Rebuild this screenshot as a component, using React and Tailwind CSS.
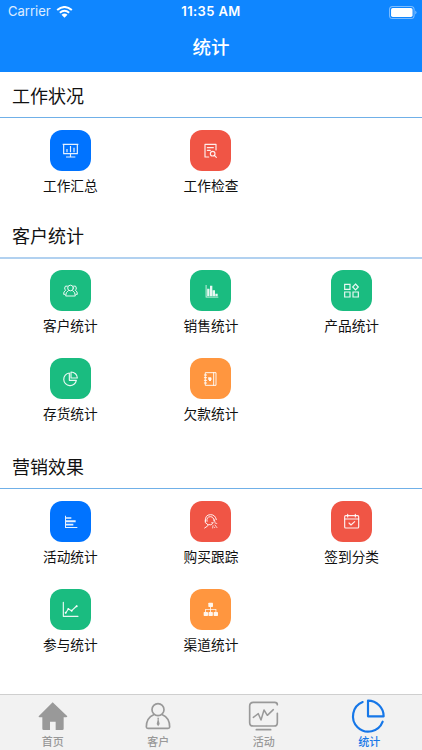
import React from "react";

const line = { fill: "none", stroke: "currentColor", strokeWidth: 3.5, strokeLinejoin: "round", strokeLinecap: "round" };

const icons = {
  board: (
    <g {...line} strokeLinecap="butt">
      <path d="M41 43H82V71H41ZM38 43H85M61.500 71V80M48 81H76" />
      <path d="M51 67V57M61.500 67V48M72 67V53" strokeWidth="3.500" />
    </g>
  ),
  inspect: (
    <g {...line}>
      <path d="M56 81H45V43H78V60M52 53H70M52 61H61" />
      <circle cx="68" cy="71" r="7" />
      <path d="M73 76L79 82" />
    </g>
  ),
  people: (
    <g {...line} strokeWidth="3">
      <circle cx="61.500" cy="54" r="8.500" />
      <path d="M55 62Q47 66 47 78H76Q76 66 68 62" />
      <path d="M52 48Q44 46 44 54Q44 58 47 61Q40 64 41 73H45M71 48Q79 46 79 54Q79 58 76 61Q83 64 82 73H78" />
    </g>
  ),
  bars: (
    <g fill="currentColor">
      <path d="M47 45H49.500V80H85V82.500H47Z" />
      <path d="M51.500 56H58.500V79H51.500ZM60 47H67V79H60ZM68 61H75V79H68ZM76 71H83V79H76Z" />
    </g>
  ),
  blocks: (
    <g {...line} strokeLinejoin="miter">
      <path d="M41 43H57V58H41ZM41 66H57V81H41ZM66 66H82V81H66ZM73.500 42L82 51L73.500 60L65 51Z" />
    </g>
  ),
  pie: (
    <g {...line}>
      <path d="M58 45A19 19 0 1 0 79 67H58Z" />
      <path d="M63 42V60H82A19 18 0 0 0 63 42Z" />
    </g>
  ),
  ledger: (
    <g {...line} strokeWidth="3">
      <path d="M47 44H78V82H47ZM71 44V82M43 51H50M43 59H50M43 67H50M43 75H50" />
      <path d="M57 59L60 60L63 59V66L60 69L57 66Z" fill="currentColor" />
    </g>
  ),
  hbars: (
    <g fill="currentColor">
      <path d="M45 44H48V78H82V81H45Z" />
      <path d="M48 48.500H64V53.500H48ZM48 58H77V63.500H48ZM48 68H70V73.500H48Z" />
    </g>
  ),
  tracking: (
    <g {...line} strokeWidth="3">
      <path d="M46 61Q44 41 62 41Q76 41 79 56" />
      <path d="M51 61Q48 47 62 47Q72 48 72 60" />
      <path d="M46 58V65L52 69Q56 73 53 75L44 81M56 71Q63 74 68 68" />
      <path d="M65 65H70M73 56L76 67M69 74L68 81M75 72L81 80M74 79V80M80 67V68" strokeWidth="2.500" />
    </g>
  ),
  calendar: (
    <g {...line}>
      <rect x="41" y="44" width="42" height="37" rx="3" />
      <path d="M41 54H83M50 40V48M73 40V48M54 66L60 72L71 62" />
    </g>
  ),
  trend: (
    <g {...line}>
      <path d="M40 40V82H84" />
      <path d="M47 72L55 60L65 65L80 51" />
      <g fill="currentColor" stroke="none">
        <circle cx="47" cy="71" r="3" />
        <circle cx="55" cy="60" r="3" />
        <circle cx="65" cy="65" r="3" />
        <circle cx="80" cy="52" r="3" />
      </g>
    </g>
  ),
  tree: (
    <g fill="currentColor">
      <rect x="55" y="41" width="14" height="13" rx="2" />
      <path d="M60.500 54H63V60H79V69H76.500V62.500H63V69H60.500V62.500H48V69H45.500V60H60.500Z" />
      <rect x="41" y="69" width="13" height="12" rx="2" />
      <rect x="55.500" y="69" width="13" height="12" rx="2" />
      <rect x="71" y="69" width="13" height="12" rx="2" />
    </g>
  ),
};

const sections = [
  {
    title: "工作状况",
    height: "h-[140px]",
    rule: "h-[46px] border-b border-[#70b0e8]",
    gap: "pt-3",
    items: [
      ["工作汇总", "board", "bg-[#0073ff]"],
      ["工作检查", "inspect", "bg-[#f05545]"],
    ],
  },
  {
    title: "客户统计",
    height: "h-[231px]",
    rule: "h-[47px] border-b-2 border-[#b1d1f0]",
    gap: "pt-[11px]",
    items: [
      ["客户统计", "people", "bg-[#1abc80]"],
      ["销售统计", "bars", "bg-[#1abc80]"],
      ["产品统计", "blocks", "bg-[#1abc80]"],
      ["存货统计", "pie", "bg-[#1abc80]"],
      ["欠款统计", "ledger", "bg-[#ff963f]"],
    ],
  },
  {
    title: "营销效果",
    height: "h-[251px]",
    rule: "h-[46px] border-b border-[#70b0e8]",
    gap: "pt-3",
    items: [
      ["活动统计", "hbars", "bg-[#0073ff]"],
      ["购买跟踪", "tracking", "bg-[#f05545]"],
      ["签到分类", "calendar", "bg-[#f05545]"],
      ["参与统计", "trend", "bg-[#1abc80]"],
      ["渠道统计", "tree", "bg-[#ff963f]"],
    ],
  },
];

const tabs = [
  {
    label: "首页",
    viewBox: "98 36 120 114",
    icon: <path d="M157 52L201 94Q201 97 197 97H190V131Q190 135 186 135H166V110H149V135H130Q126 135 126 131V97H118Q114 97 115 94Z" fill="currentColor" />,
  },
  {
    label: "客户",
    viewBox: "415 36 120 114",
    icon: (
      <g {...line} strokeWidth="5">
        <circle cx="475" cy="74" r="18" />
        <path d="M462 89Q440 98 440 126Q440 130 445 130H505Q510 130 510 126Q510 98 488 89" />
        <path d="M473 98H478L477 104L480 117L475.500 124L471 117L474 104Z" fill="currentColor" stroke="none" />
      </g>
    ),
  },
  {
    label: "活动",
    viewBox: "98 36 120 114",
    icon: (
      <g {...line} strokeWidth="5">
        <path d="M198 59Q198 52 190 52H126Q115 52 115 63V113Q115 123 126 123H188Q198 123 198 113V85M135 134H178" />
        <path d="M126 97L141 86L149 105L158 75L168 91L186 74" strokeWidth="4.500" />
      </g>
    ),
  },
  {
    label: "统计",
    viewBox: "415 36 120 114",
    active: true,
    icon: (
      <g {...line} strokeWidth="6.500">
        <path d="M456 51A46 46 0 1 0 516 110" />
        <path d="M472 47V94H519A47 47 0 0 0 472 47Z" />
      </g>
    ),
  },
];

function Tile({ label, icon, color }) {
  return (
    <div className="flex h-[88px] flex-col items-center">
      <div className={`size-[41px] rounded-[12px] text-white/90 ${color}`}>
        <svg viewBox="0 0 123 123" className="size-full">{icons[icon]}</svg>
      </div>
      <span className="mt-[5px] text-[13.7px] leading-5 text-[#111]">{label}</span>
    </div>
  );
}

export default function App() {
  return (
    <div className="flex h-[750px] w-[422px] flex-col overflow-hidden bg-white font-['Inter','Noto_Sans_CJK_SC',sans-serif]">
      <header className="h-[72px] shrink-0 bg-[#0f86ff] text-white">
        <div className="grid h-6 grid-cols-3 items-center px-2 text-[13px]">
          <div className="flex items-center gap-[5px]">
            <span className="text-white/85">Carrier</span>
            <svg viewBox="0 0 50 36" className="h-3 w-[17px]" fill="none" stroke="currentColor" strokeWidth="6">
              <path d="M3 12Q25 -6 47 12M11 20Q25 9 39 20" />
              <path d="M16 26Q25 19 34 26L25 35Z" fill="currentColor" stroke="none" />
            </svg>
          </div>
          <span className="text-center font-semibold tracking-[0.4px]">11:35 AM</span>
          <svg viewBox="0 0 82 38" className="mr-[-3px] h-[13px] w-[28px] justify-self-end">
            <rect x="1.500" y="1.500" width="72" height="35" rx="9" fill="none" stroke="currentColor" strokeOpacity="0.450" strokeWidth="3" />
            <rect x="6" y="6" width="63" height="26" rx="5" fill="currentColor" />
            <path d="M77 13Q84 19 77 25Z" fill="currentColor" opacity="0.500" />
          </svg>
        </div>
        <h1 className="text-center text-[18.500px] leading-[46px] font-medium">统计</h1>
      </header>
      <main className="min-h-0 flex-1">
        {sections.map((section) => (
          <section key={section.title} className={section.height}>
            <h2 className={`pl-3 text-[18px] leading-[49px] text-[#111] ${section.rule}`}>{section.title}</h2>
            <div className={`grid grid-cols-3 ${section.gap}`}>
              {section.items.map(([label, icon, color]) => (
                <Tile key={label} label={label} icon={icon} color={color} />
              ))}
            </div>
          </section>
        ))}
      </main>
      <nav className="grid h-14 shrink-0 grid-cols-4 border-t border-[#cfcfcf] bg-[#f2f2f2]">
        {tabs.map((tab) => (
          <div key={tab.label} className={`flex flex-col items-center pt-[2px] ${tab.active ? "text-[#1677e8]" : "text-[#999]"}`}>
            <svg viewBox={tab.viewBox} className="h-[38px] w-10 shrink-0">{tab.icon}</svg>
            <span className="text-[11px] leading-[15px] font-medium">{tab.label}</span>
          </div>
        ))}
      </nav>
    </div>
  );
}
